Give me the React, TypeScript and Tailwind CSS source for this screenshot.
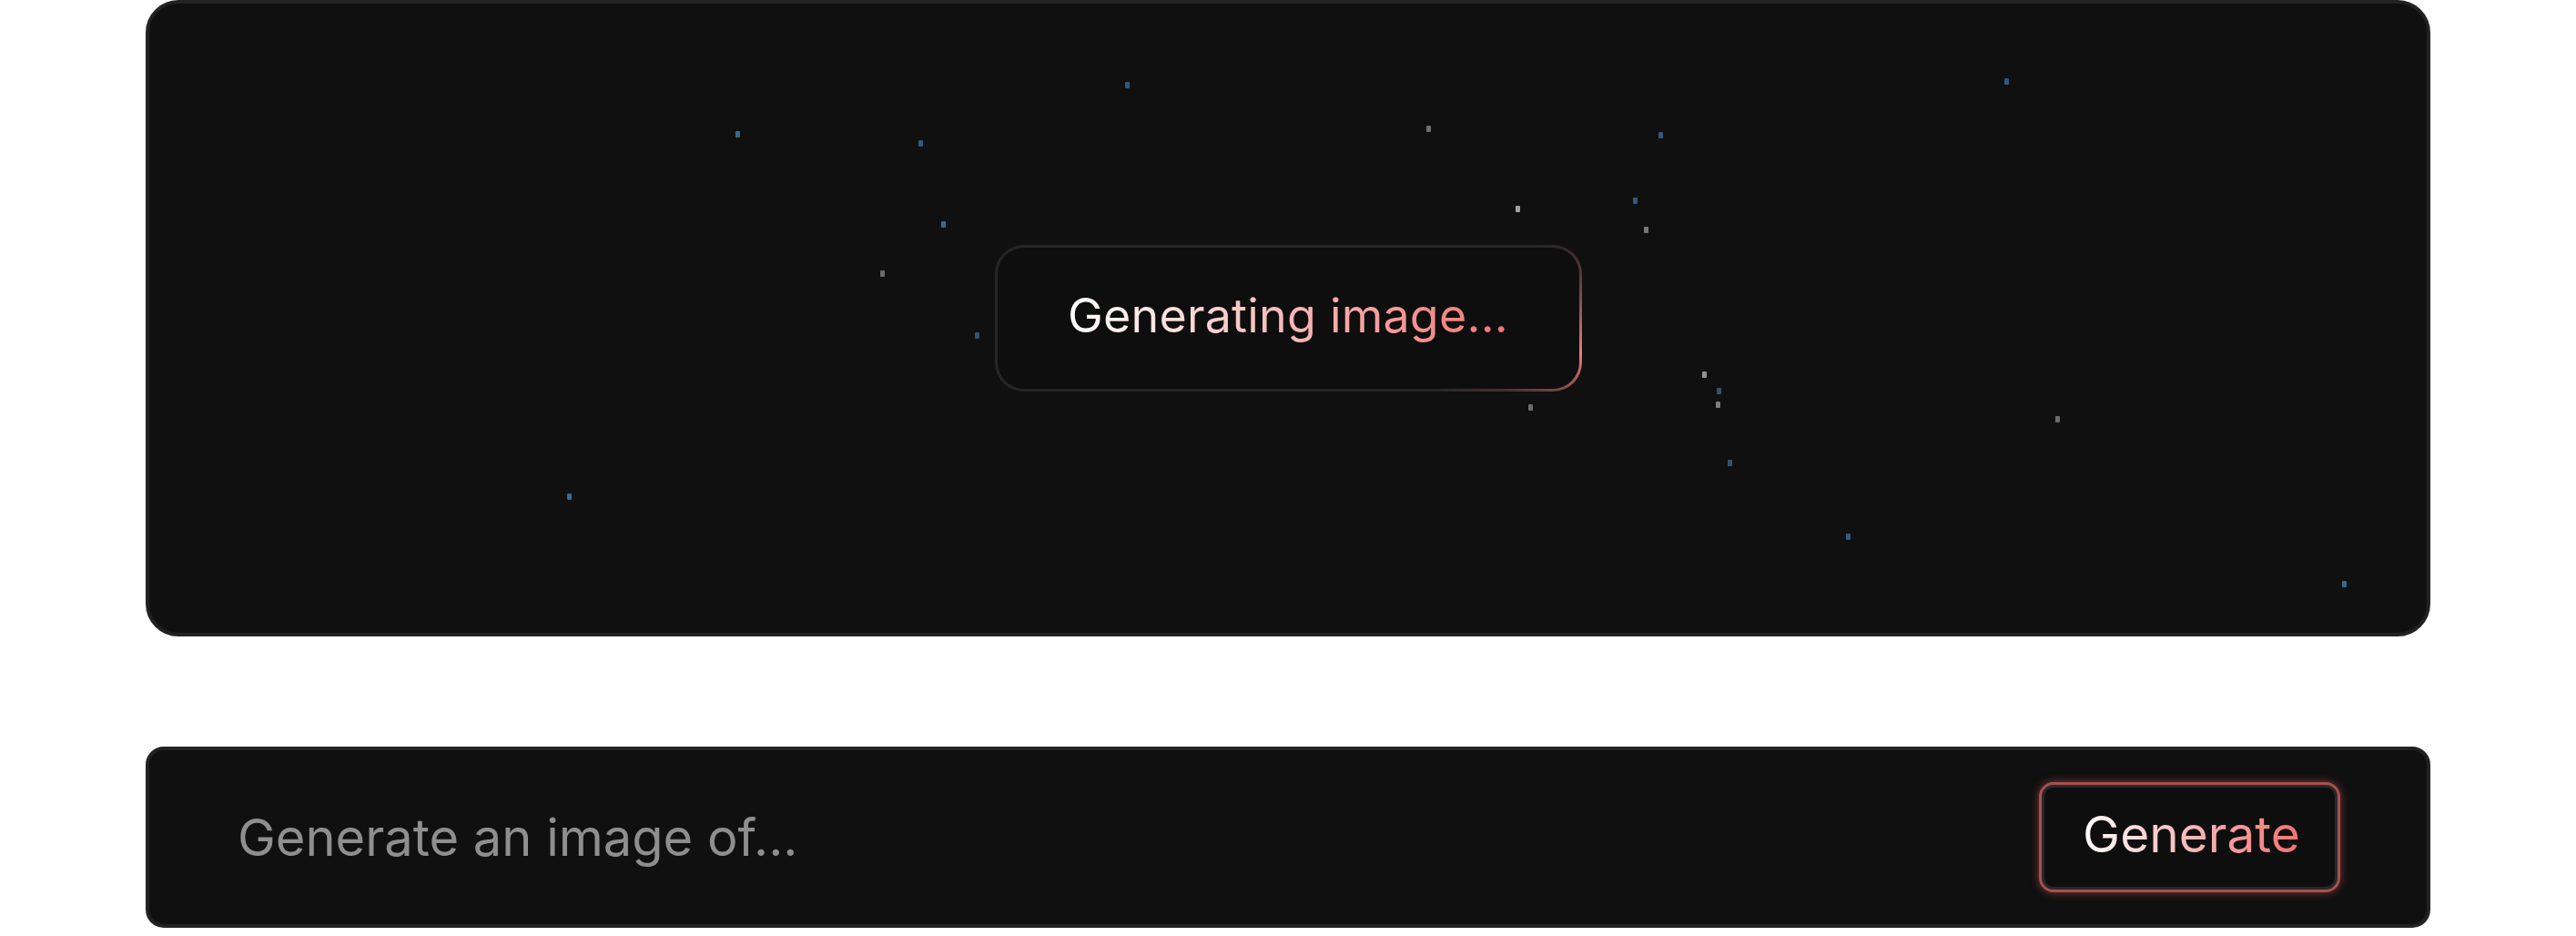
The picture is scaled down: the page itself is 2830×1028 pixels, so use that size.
import React from 'react';

const stars: { x: number; y: number; c: string }[] = [
    { x: 1072, y: 86, c: '#3f72a0' },
    { x: 644, y: 140, c: '#4c86b8' },
    { x: 845, y: 150, c: '#3f72a0' },
    { x: 870, y: 239, c: '#4c86b8' },
    { x: 803, y: 293, c: '#8a8a8a' },
    { x: 907, y: 361, c: '#3f6a90' },
    { x: 2038, y: 82, c: '#3f72a0' },
    { x: 1403, y: 134, c: '#8f8f8f' },
    { x: 1658, y: 141, c: '#3f72a0' },
    { x: 1630, y: 213, c: '#3f72a0' },
    { x: 1501, y: 222, c: '#d0d0d0' },
    { x: 1642, y: 245, c: '#9a9a9a' },
    { x: 1706, y: 404, c: '#bdbdbd' },
    { x: 1722, y: 422, c: '#3f6a90' },
    { x: 1721, y: 437, c: '#a0a0a0' },
    { x: 1515, y: 440, c: '#8a8a8a' },
    { x: 2094, y: 453, c: '#8a8a8a' },
    { x: 1734, y: 501, c: '#3f6a90' },
    { x: 459, y: 538, c: '#4c86b8' },
    { x: 1864, y: 582, c: '#3f72a0' },
    { x: 2409, y: 634, c: '#4c86b8' },
];

export default function App() {
    return (
        <div className="min-h-screen bg-white px-[160px]" style={{ fontFamily: 'Inter, "Noto Sans", sans-serif' }}>
            {/* Preview canvas */}
            <div className="relative h-[699px] rounded-[36px] border-[4px] border-[#222222] bg-[#101010] flex items-center justify-center overflow-hidden">
                {stars.map((s, i) => (
                    <span
                        key={i}
                        className="absolute w-[5px] h-[7px] rounded-[1px] opacity-75"
                        style={{ left: s.x, top: s.y, backgroundColor: s.c }}
                    />
                ))}

                <div className="relative rounded-[32px] p-[3px] bg-[image:conic-gradient(from_0deg,#262626_0deg,#262626_74deg,#5a3a3a_82deg,#ee7c7c_97deg,#4a3030_108deg,#262626_116deg,#262626_360deg)]">
                    <div className="w-[639px] h-[155px] rounded-[29px] bg-[#0e0e0e] flex items-center justify-center">
                        <span className="text-[52px] leading-none tracking-[0.2px] bg-linear-to-r from-white via-[#f6b8b8] to-[#f07474] bg-clip-text text-transparent pb-[6px]">
                            Generating image...
                        </span>
                    </div>
                </div>
            </div>

            {/* Prompt bar */}
            <div className="mt-[121px] h-[199px] rounded-[20px] border-[4px] border-[#222222] bg-[#101010] flex items-center pl-[97px] pr-[95px]">
                <input
                    className="flex-1 bg-transparent outline-none text-[56px] text-white placeholder:text-[#8e8e8e]"
                    placeholder="Generate an image of..."
                />
                <button className="w-[331px] h-[121px] rounded-[16px] border-[3px] border-[#a85050] bg-[#0e0e0e] shadow-[inset_0_0_0_3px_#2a2727,0_0_10px_rgba(239,100,100,0.5)] flex items-center justify-center">
                    <span className="text-[55px] leading-none bg-linear-to-r from-white via-[#f6b8b8] to-[#f07070] bg-clip-text text-transparent pb-[6px] pl-[4px]">
                        Generate
                    </span>
                </button>
            </div>
        </div>
    );
}
